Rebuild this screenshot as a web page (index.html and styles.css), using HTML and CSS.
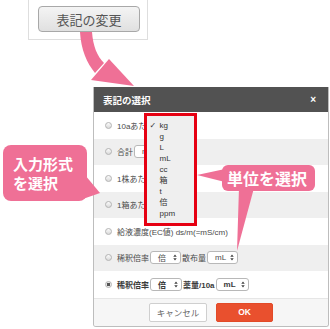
FILE: index.html
```html
<!DOCTYPE html>
<html lang="ja">
<head>
<meta charset="utf-8">
<title>表記の選択</title>
<link rel="stylesheet" href="styles.css">
</head>
<body>
<div class="stage">
  <div class="trigger-wrap">
    <button class="trigger">表記の変更</button>
  </div>

  <div class="dialog">
    <div class="dlg-head">
      <span class="dlg-title">表記の選択</span>
      <span class="close">×</span>
    </div>
    <ul class="opts">
      <li class="opt"><span class="radio"></span>10aあたり</li>
      <li class="opt"><span class="radio"></span>合計<span class="sel">mL<svg viewBox="0 0 4 8"><path d="M0 3.2 2 0.5 4 3.2Z M0 4.8 2 7.5 4 4.8Z" fill="#444"/></svg></span></li>
      <li class="opt"><span class="radio"></span>1株あたり</li>
      <li class="opt"><span class="radio"></span>1箱あたり</li>
      <li class="opt"><span class="radio"></span>給液濃度(EC値) ds/m(=mS/cm)</li>
      <li class="opt"><span class="radio"></span>稀釈倍率<span class="sel">倍<svg viewBox="0 0 4 8"><path d="M0 3.2 2 0.5 4 3.2Z M0 4.8 2 7.5 4 4.8Z" fill="#444"/></svg></span>散布量<span class="sel">mL<svg viewBox="0 0 4 8"><path d="M0 3.2 2 0.5 4 3.2Z M0 4.8 2 7.5 4 4.8Z" fill="#444"/></svg></span></li>
      <li class="opt on"><span class="radio checked"></span>稀釈倍率<span class="sel w32">倍<svg viewBox="0 0 4 8"><path d="M0 3.2 2 0.5 4 3.2Z M0 4.8 2 7.5 4 4.8Z" fill="#444"/></svg></span>薬量/10a<span class="sel w33">mL<svg viewBox="0 0 4 8"><path d="M0 3.2 2 0.5 4 3.2Z M0 4.8 2 7.5 4 4.8Z" fill="#444"/></svg></span></li>
    </ul>
    <div class="dlg-foot">
      <button class="btn cancel">キャンセル</button>
      <button class="btn ok">OK</button>
    </div>
  </div>

  <ul class="menu">
    <li class="check">kg</li>
    <li>g</li>
    <li>L</li>
    <li>mL</li>
    <li>cc</li>
    <li>箱</li>
    <li>t</li>
    <li>倍</li>
    <li>ppm</li>
  </ul>

  <svg class="overlay" viewBox="0 0 330 329" width="330" height="329">
    <path d="M80 32 C81 50 87 63 95 73 L104 63 C97 56 93 46 92 32 Z" fill="#ef7096"/>
    <polygon points="91,80 109,59 134,86" fill="#ef7096"/>
    <polygon points="85,175 100,193 80,200" fill="#ef7096"/>
    <polygon points="225,169 197,175 225,182" fill="#ef7096"/>
    <polygon points="239,188 254,188 237,251" fill="#ef7096"/>
  </svg>

  <div class="bubble b-left"><span class="ln">入力形式</span><span class="ln">を選択</span></div>
  <div class="bubble b-right">単位を選択</div>
</div>
</body>
</html>
```

FILE: styles.css
```css
* { box-sizing: border-box; }

body {
  margin: 0;
  width: 330px;
  height: 329px;
  overflow: hidden;
  background: #fff;
  font-family: "Liberation Sans", "Noto Sans CJK JP", sans-serif;
}

.stage {
  position: relative;
  width: 330px;
  height: 329px;
}

.trigger-wrap {
  margin-left: 28px;
  width: 120px;
  height: 40px;
  border: 1px solid #dedede;
  border-top: none;
  padding: 6px 0 0 9px;
}

.trigger {
  display: flex;
  align-items: center;
  justify-content: center;
  width: 102px;
  height: 26px;
  padding: 0;
  border: 1px solid #a8a8a8;
  border-radius: 4px;
  background: linear-gradient(#f4f4f4, #e0e0e0);
  font-family: "Noto Sans CJK JP", sans-serif;
  font-size: 13px;
  color: #555;
}

.dialog {
  margin: 47px 0 0 93px;
  width: 236px;
  border: 1px solid #bdbdbd;
  border-top: none;
  border-radius: 0 0 3px 3px;
  overflow: hidden;
}

.dlg-head {
  height: 25px;
  margin: 0 -1px;
  background: #525252;
  display: flex;
  align-items: center;
  justify-content: space-between;
  padding: 0 13px 0 10px;
  color: #fff;
  font-family: "Noto Sans CJK JP", sans-serif;
  font-weight: bold;
  font-size: 9.5px;
}

.close {
  font-family: "Liberation Sans", sans-serif;
  font-size: 10px;
  font-weight: bold;
}

.opts {
  list-style: none;
  margin: 0;
  padding: 0;
}

.opt {
  height: 26.5px;
  display: flex;
  align-items: center;
  padding-left: 11px;
  font-size: 8px;
  color: #4a4a4a;
  white-space: nowrap;
}

.opt:nth-child(even) { background: #efefef; }

.opt.on { font-weight: bold; color: #3a3a3a; }

.radio {
  flex: none;
  width: 7px;
  height: 7px;
  margin-right: 5px;
  border-radius: 50%;
  border: 1px solid #b3b3b3;
  background: linear-gradient(#fbfbfb, #dadada);
}

.radio.checked {
  background: radial-gradient(circle, #555 0 1.5px, #e9e9e9 2px);
}

.sel {
  flex: none;
  display: inline-flex;
  align-items: center;
  justify-content: space-between;
  width: 31px;
  height: 13px;
  margin: 0 1px;
  padding: 0 3px 0 7px;
  border: 1px solid #b8b8b8;
  border-radius: 3px;
  background: #fff;
  font-size: 8px;
}

.sel.w32 { width: 32px; }
.sel.w33 { width: 33px; }

.sel svg { width: 4px; height: 7px; }

.dlg-foot {
  height: 28.5px;
  background: #f6f6f6;
  border-top: 1px solid #e6e6e6;
  display: flex;
  align-items: center;
  justify-content: center;
  gap: 9px;
}

.btn {
  height: 19px;
  padding: 0;
  border-radius: 2px;
  display: flex;
  align-items: center;
  justify-content: center;
  font-family: "Liberation Sans", "Noto Sans CJK JP", sans-serif;
  font-size: 8.5px;
}

.cancel {
  width: 58px;
  background: #fff;
  border: 1px solid #cfcfcf;
  color: #666;
}

.ok {
  width: 57px;
  background: #e9502e;
  border: 1px solid #e24a28;
  color: #fff;
  font-weight: bold;
}

.menu {
  position: absolute;
  left: 144px;
  top: 113px;
  width: 53px;
  height: 113px;
  margin: 0;
  list-style: none;
  border: 3.5px solid #e60012;
  background: #efefef;
  padding: 4px 0 0 12.5px;
  font-size: 8px;
  line-height: 11px;
  color: #333;
}

.menu li { position: relative; }

.menu .check::before {
  content: "✓";
  position: absolute;
  left: -10px;
  font-family: "DejaVu Sans", sans-serif;
  font-size: 8px;
}

.overlay {
  position: absolute;
  left: 0;
  top: 0;
  pointer-events: none;
}

.bubble {
  position: absolute;
  background: #ef7096;
  color: #fff;
  font-family: "Noto Sans CJK JP", sans-serif;
  font-weight: bold;
}

.b-left {
  left: 3px;
  top: 145px;
  width: 84px;
  height: 56px;
  border-radius: 8px;
  padding-left: 10px;
  font-size: 15px;
  line-height: 19px;
  display: flex;
  flex-direction: column;
  justify-content: center;
}

.b-left .ln {
  display: block;
  height: 19px;
  overflow: hidden;
}

.b-right {
  left: 222px;
  top: 165px;
  width: 93px;
  height: 26px;
  border-radius: 6px;
  padding-left: 5px;
  font-size: 16px;
  display: flex;
  align-items: center;
}
```
